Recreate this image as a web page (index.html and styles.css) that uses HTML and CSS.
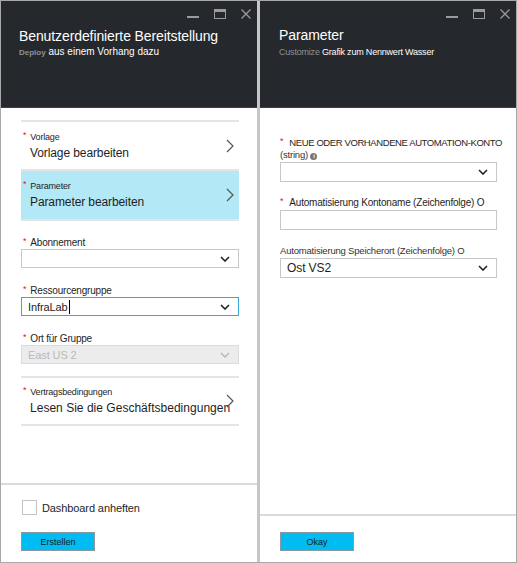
FILE: index.html
```html
<!DOCTYPE html>
<html lang="de">
<head>
<meta charset="utf-8">
<link rel="stylesheet" href="styles.css">
</head>
<body>
<div class="frame">
  <section class="blade left">
    <header class="head">
      <div class="controls">
        <span class="ctl min"></span>
        <span class="ctl max"></span>
        <svg class="ctl close" width="10" height="10" viewBox="0 0 10 10"><path d="M0.5 0.5L9.5 9.5M9.5 0.5L0.5 9.5" stroke="#9a9b9d" stroke-width="1.3" fill="none"/></svg>
      </div>
      <h1 class="title">Benutzerdefinierte Bereitstellung</h1>
      <div class="sub"><span class="sub-dim">Deploy</span> aus einem Vorhang dazu</div>
    </header>
    <div class="body">
      <div class="nav-item">
        <div class="nav-text">
          <div class="lbl"><span class="req">*</span>Vorlage</div>
          <div class="val">Vorlage bearbeiten</div>
        </div>
        <svg class="chev" width="8" height="14" viewBox="0 0 8 14"><path d="M1 1L7 7L1 13" stroke="#555" stroke-width="1.2" fill="none"/></svg>
      </div>
      <div class="nav-item selected">
        <div class="nav-text">
          <div class="lbl"><span class="req">*</span>Parameter</div>
          <div class="val">Parameter bearbeiten</div>
        </div>
        <svg class="chev" width="8" height="14" viewBox="0 0 8 14"><path d="M1 1L7 7L1 13" stroke="#555" stroke-width="1.2" fill="none"/></svg>
      </div>
      <div class="field first">
        <div class="flbl"><span class="req">*</span>Abonnement</div>
        <div class="select"><span class="stext"></span><svg class="dd" width="10" height="6" viewBox="0 0 10 6"><path d="M1 1L5 5L9 1" stroke="#222" stroke-width="1.6" fill="none"/></svg></div>
      </div>
      <div class="field">
        <div class="flbl"><span class="req">*</span>Ressourcengruppe</div>
        <div class="select focus"><span class="stext">InfraLab<span class="caret"></span></span><svg class="dd" width="10" height="6" viewBox="0 0 10 6"><path d="M1 1L5 5L9 1" stroke="#222" stroke-width="1.6" fill="none"/></svg></div>
      </div>
      <div class="field">
        <div class="flbl"><span class="req">*</span>Ort für Gruppe</div>
        <div class="select disabled"><span class="stext">East US 2</span><svg class="dd" width="10" height="6" viewBox="0 0 10 6"><path d="M1 1L5 5L9 1" stroke="#b5b5b5" stroke-width="1.3" fill="none"/></svg></div>
      </div>
      <div class="nav-item terms">
        <div class="nav-text">
          <div class="lbl"><span class="req">*</span>Vertragsbedingungen</div>
          <div class="val">Lesen Sie die Geschäftsbedingungen</div>
        </div>
        <svg class="chev" width="8" height="14" viewBox="0 0 8 14"><path d="M1 1L7 7L1 13" stroke="#555" stroke-width="1.2" fill="none"/></svg>
      </div>
    </div>
    <footer class="foot">
      <label class="check"><span class="box"></span>Dashboard anheften</label>
      <button class="btn">Erstellen</button>
    </footer>
  </section>
  <div class="divider"></div>
  <section class="blade right">
    <header class="head">
      <div class="controls">
        <span class="ctl min"></span>
        <span class="ctl max"></span>
        <svg class="ctl close" width="10" height="10" viewBox="0 0 10 10"><path d="M0.5 0.5L9.5 9.5M9.5 0.5L0.5 9.5" stroke="#9a9b9d" stroke-width="1.3" fill="none"/></svg>
      </div>
      <h1 class="title">Parameter</h1>
      <div class="sub small"><span class="sub-dim">Customize</span> Grafik zum Nennwert Wasser</div>
    </header>
    <div class="body rbody">
      <div class="pfield">
        <div class="plbl caps"><span class="req">*</span> NEUE ODER VORHANDENE AUTOMATION-KONTO</div>
        <div class="plbl sm">(string) <span class="info">i</span></div>
        <div class="select"><span class="stext"></span><svg class="dd" width="10" height="6" viewBox="0 0 10 6"><path d="M1 1L5 5L9 1" stroke="#222" stroke-width="1.6" fill="none"/></svg></div>
      </div>
      <div class="pfield">
        <div class="plbl"><span class="req">*</span> Automatisierung Kontoname (Zeichenfolge) O</div>
        <div class="select input"></div>
      </div>
      <div class="pfield">
        <div class="plbl sm">Automatisierung Speicherort (Zeichenfolge) O</div>
        <div class="select"><span class="stext big">Ost VS2</span><svg class="dd" width="10" height="6" viewBox="0 0 10 6"><path d="M1 1L5 5L9 1" stroke="#222" stroke-width="1.6" fill="none"/></svg></div>
      </div>
    </div>
    <footer class="foot rfoot">
      <button class="btn">Okay</button>
    </footer>
  </section>
</div>
</body>
</html>
```

FILE: styles.css
```css
* { box-sizing: border-box; }
html, body { margin: 0; padding: 0; background: #fff; }
body { font-family: "Liberation Sans", Arial, sans-serif; color: #1e1e1e; }

.frame {
  width: 517px;
  height: 563px;
  display: flex;
  border: 1px solid #a8a8a8;
  background: #fff;
}

.blade { display: flex; flex-direction: column; height: 100%; min-width: 0; }
.blade.left { width: 256px; flex: none; }
.blade.right { flex: 1 1 0; }

.divider { width: 3px; flex: none; background: #c6c6c6; }

.head {
  position: relative;
  height: 107px;
  background: #25282c;
  border-bottom: 1px solid #3c3f43;
  padding: 26px 0 0 18px;
  color: #fff;
  flex: none;
}
.right .head { padding: 25px 0 0 19px; }

.controls {
  position: absolute;
  top: 8px;
  right: 6px;
  display: flex;
  align-items: flex-start;
  gap: 15px;
}
.ctl { display: block; }
.min { width: 12px; height: 9px; border-bottom: 2px solid #9a9b9d; }
.max { width: 12px; height: 10px; border: 1.5px solid #9a9b9d; border-top-width: 3px; }

.title {
  margin: 0;
  font-weight: normal;
  font-size: 14px;
  line-height: 18px;
  letter-spacing: -0.1px;
}
.sub { font-size: 10px; line-height: 14px; }
.sub.small { font-size: 9px; margin-top: 1px; letter-spacing: -0.2px; }
.sub-dim { color: #8f9296; font-size: 8px; font-weight: bold; }
.sub.small .sub-dim { font-size: 9px; font-weight: normal; }

.body { flex: 1; padding: 12px 18px 0 20px; }

.req { color: #e81123; font-size: 9px; margin-right: 4px; position: relative; top: -2px; }

.nav-item {
  display: flex;
  align-items: center;
  border-top: 2px solid #e4e4e4;
  border-bottom: 2px solid #e4e4e4;
  height: 51px;
  padding: 0 5px 0 2px;
}
.nav-item + .nav-item { border-top: 0; }
.nav-item.selected { background: #b3e8f6; height: 50px; }
.nav-text { flex: 1; min-width: 0; }
.lbl { font-size: 9px; line-height: 12px; letter-spacing: -0.2px; }
.val { font-size: 12px; line-height: 16px; margin-top: 2px; padding-left: 7px; letter-spacing: -0.1px; white-space: nowrap; }
.terms .val { letter-spacing: 0.02px; }
.chev { flex: none; }

.field { margin-top: 17px; }
.field.first { margin-top: 16px; }
.flbl { font-size: 10px; line-height: 11px; padding-left: 2px; letter-spacing: -0.2px; }
.select {
  display: flex;
  align-items: center;
  height: 19px;
  border: 1px solid #c8c8c8;
  padding: 0 8px 0 6px;
  margin-top: 0;
  background: #fff;
}
.select.focus { border-color: #38a8d8; }
.select.disabled { background: #ececec; border-color: #dcdcdc; }
.stext { flex: 1; font-size: 11px; letter-spacing: -0.1px; display: flex; align-items: center; }
.disabled .stext { color: #b9b9b9; }
.caret { display: inline-block; width: 1px; height: 14px; background: #000; margin-left: 1px; }
.dd { flex: none; }

.nav-item.terms { margin-top: 12px; height: 50px; }

.foot {
  flex: none;
  height: 79px;
  border-top: 2px solid #dadada;
  padding: 15px 0 0 20px;
}
.rfoot { height: 48px; padding-top: 16px; }
.check { display: flex; align-items: center; font-size: 11px; letter-spacing: -0.1px; }
.box { width: 15px; height: 15px; border: 1px solid #c4c4c4; margin: 0 5px 0 1px; }
.btn {
  display: block;
  margin-top: 17px;
  width: 74px;
  height: 19px;
  background: #00bcf2;
  border: 1px solid #8a9aa0;
  font-family: "Liberation Sans", Arial, sans-serif;
  font-size: 9px;
  color: #1a1a1a;
  padding: 0;
}
.rfoot .btn { margin-top: 0; }

.rbody { padding: 29px 19px 0 20px; }
.pfield { margin-bottom: 15px; }
.pfield .select { height: 20px; margin-top: 1px; }
.plbl { font-size: 10px; line-height: 12px; letter-spacing: -0.2px; }
.plbl.caps { font-size: 9.5px; letter-spacing: -0.4px; white-space: nowrap; }
.plbl.sm { font-size: 9.5px; color: #333; }
.info {
  display: inline-block;
  width: 7px; height: 7px;
  border-radius: 50%;
  background: #777;
  color: #fff;
  font-size: 6px;
  line-height: 7px;
  text-align: center;
  font-weight: bold;
}
.stext.big { font-size: 12px; }
```
